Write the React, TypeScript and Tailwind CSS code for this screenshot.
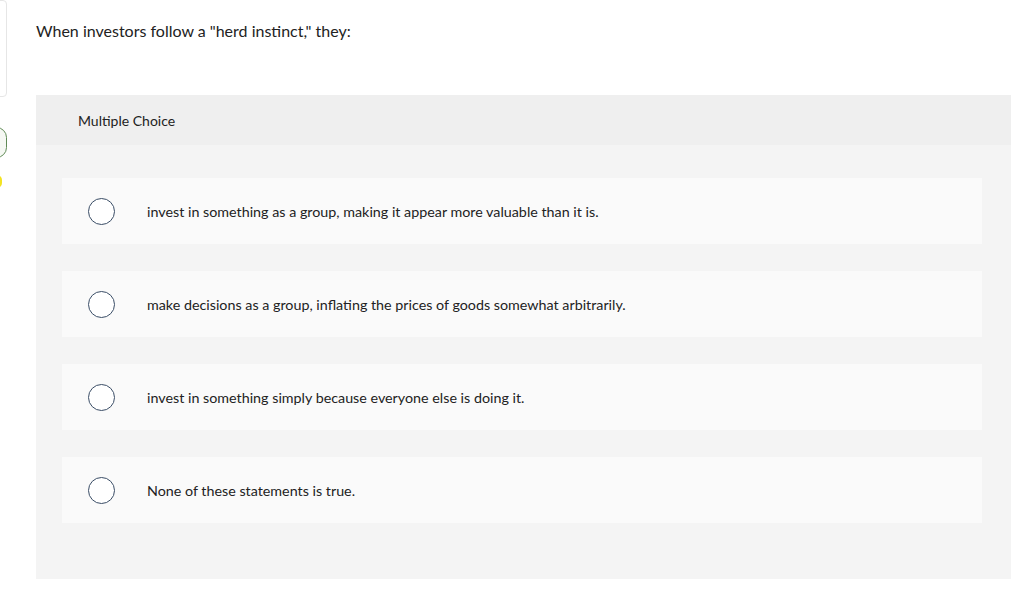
const choices = [
  "invest in something as a group, making it appear more valuable than it is.",
  "make decisions as a group, inflating the prices of goods somewhat arbitrarily.",
  "invest in something simply because everyone else is doing it.",
  "None of these statements is true.",
];

function ChoiceRow({ label }: { label: string }) {
  return (
    <div className="flex h-[66px] items-center bg-[#fafafa] pl-[26px]">
      <span className="size-[27px] shrink-0 rounded-full border-[1.5px] border-[#3a4d66] bg-white" />
      <span className="ml-[32px] pt-[2px] text-[14.3px] leading-[20px] text-[#222]">
        {label}
      </span>
    </div>
  );
}

export default function App() {
  return (
    <div
      className="flex h-[605px] w-[1024px] overflow-hidden bg-white"
      style={{ fontFamily: "Lato, 'Open Sans', sans-serif" }}
    >
      {/* collapsed side rail, mostly scrolled out of view */}
      <div className="flex w-[36px] shrink-0 flex-col">
        <div className="-ml-[10px] h-[97px] w-[17px] rounded-br-[4px] rounded-tr-[4px] border border-[#e6e6e6] bg-white" />
        <div className="-ml-[14px] mt-[30px] h-[31px] w-[21px] rounded-full border border-[#5f8a55] bg-[#f5f8f3]" />
        <div className="-ml-[8px] mt-[17px] h-[13px] w-[10px] rounded-full bg-[#f3e322]" />
      </div>

      <div className="flex flex-1 flex-col pr-[13px]">
        <p className="mt-[19px] text-[16px] leading-[24px] text-[#222]">
          When investors follow a "herd instinct," they:
        </p>

        <div className="mt-[52px] bg-[#f4f4f4]">
          <div className="flex h-[50px] items-center bg-[#efefef] pl-[42px] text-[14px] text-[#222]">
            Multiple Choice
          </div>
          <div className="flex flex-col gap-[27px] pb-[56px] pl-[26px] pr-[29px] pt-[33px]">
            {choices.map((c) => (
              <ChoiceRow key={c} label={c} />
            ))}
          </div>
        </div>
      </div>
    </div>
  );
}
